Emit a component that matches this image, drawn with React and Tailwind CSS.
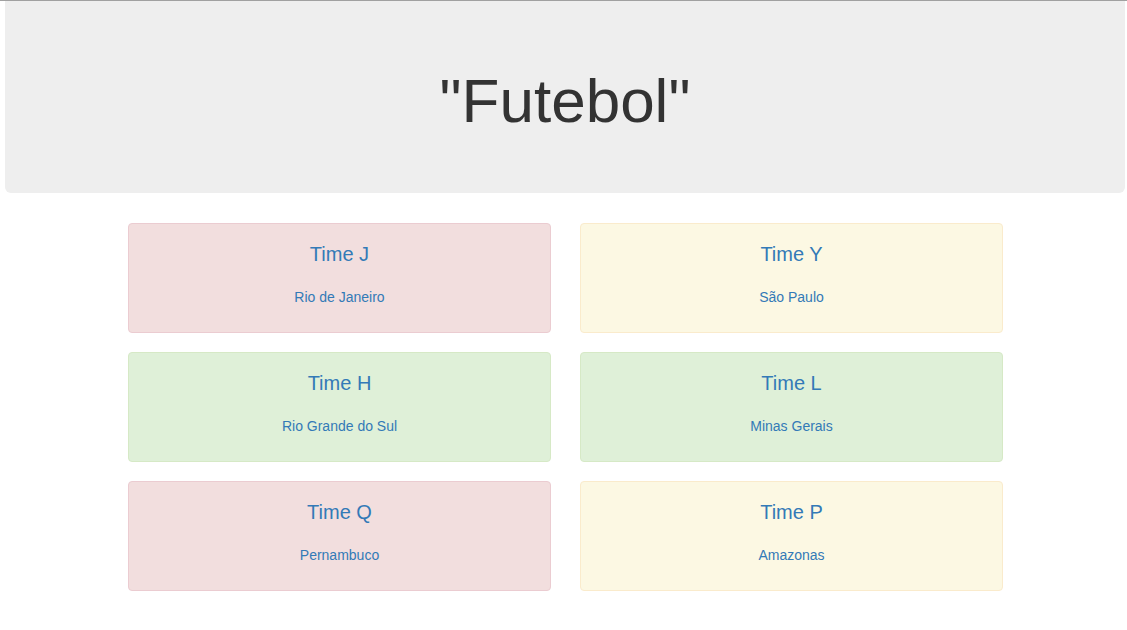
const TEAMS = [
  { name: 'Time J', state: 'Rio de Janeiro', tone: 'danger' },
  { name: 'Time Y', state: 'São Paulo', tone: 'warning' },
  { name: 'Time H', state: 'Rio Grande do Sul', tone: 'success' },
  { name: 'Time L', state: 'Minas Gerais', tone: 'success' },
  { name: 'Time Q', state: 'Pernambuco', tone: 'danger' },
  { name: 'Time P', state: 'Amazonas', tone: 'warning' },
];

const TONES = {
  danger: 'bg-[#f2dede] border-[#ebccd1]',
  warning: 'bg-[#fcf8e3] border-[#faebcc]',
  success: 'bg-[#dff0d8] border-[#d6e9c6]',
};

function TeamCard({ team }) {
  return (
    <div
      className={`h-[110px] border rounded-[4px] pt-[19px] text-center text-[#337ab7] ${TONES[team.tone]}`}
    >
      <h4 className="text-[20px] leading-[22px]">{team.name}</h4>
      <p className="mt-[22px] text-[14px] leading-[20px]">{team.state}</p>
    </div>
  );
}

export default function App() {
  return (
    <div
      className="min-h-screen bg-white border-t border-[#a0a0a0]"
      style={{ fontFamily: '"Liberation Sans", Arial, sans-serif' }}
    >
      <div className="ml-[5px] mr-[2px] h-[192px] bg-[#eeeeee] rounded-b-[6px] flex items-center justify-center">
        <h1 className="text-[62px] leading-[69px] text-[#333333] pt-[6px]">"Futebol"</h1>
      </div>
      <div className="ml-[128px] w-[875px] mt-[30px] grid grid-cols-2 gap-x-[29px] gap-y-[19px]">
        {TEAMS.map((team) => (
          <TeamCard key={team.name} team={team} />
        ))}
      </div>
    </div>
  );
}
